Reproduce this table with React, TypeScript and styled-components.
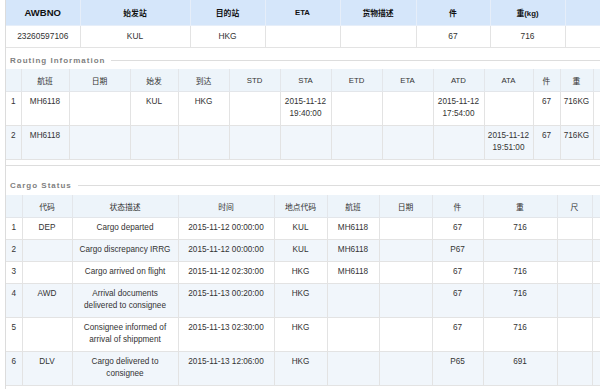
import React from "react";
import styled, { createGlobalStyle } from "styled-components";

const GlobalStyle = createGlobalStyle`
  html, body {
    margin: 0;
    padding: 0;
    background: #ffffff;
    overflow: hidden;
  }
  body {
    font-family: "Liberation Sans", "Noto Sans CJK SC", sans-serif;
    color: #333333;
  }
`;

const Page = styled.div`
  margin-left: 5px;
  width: 700px;
  height: 389px;
  border-left: 1px solid #dcdcdc;
`;

const Table = styled.table`
  border-collapse: collapse;
  table-layout: fixed;
`;

const Col = styled.col<{ $w: number }>`
  width: ${(p) => p.$w}px;
`;

const HeadCell = styled.th<{ $main?: boolean; $big?: boolean }>`
  height: ${(p) => (p.$main ? 25 : 22)}px;
  padding: 0 2px;
  background: ${(p) => (p.$main ? "#d5e6fa" : "#edf4fa")};
  border: 1px solid ${(p) => (p.$main ? "#e6eef9" : "#e3e6ea")};
  border-top: none;
  font-size: ${(p) => (p.$big ? 9.5 : 7.8)}px;
  font-weight: ${(p) => (p.$main ? "bold" : "normal")};
  color: ${(p) => (p.$main ? "#111111" : "#333333")};
  text-align: center;
  vertical-align: middle;
  &:first-child {
    border-left: none;
  }
`;

const Row = styled.tr<{ $even?: boolean }>`
  background: ${(p) => (p.$even ? "#f1f6fb" : "#ffffff")};
`;

const Cell = styled.td<{ $large?: boolean; $inset?: boolean }>`
  padding: 4px ${(p) => (p.$inset ? 5 : 1)}px 5px;
  border: 1px solid #e3e3e3;
  font-size: ${(p) => (p.$large ? 8.4 : 8.2)}px;
  line-height: 12px;
  text-align: center;
  vertical-align: top;
  &:first-child {
    border-left: none;
  }
`;

const Section = styled.section<{ $gap: number; $closed?: boolean }>`
  margin-top: ${(p) => p.$gap}px;
  padding-bottom: ${(p) => (p.$closed ? 5 : 0)}px;
  border-bottom: ${(p) => (p.$closed ? "1px solid #dddddd" : "none")};
`;

const Legend = styled.div<{ $after: number }>`
  display: flex;
  align-items: center;
  gap: 6px;
  height: 12px;
  padding-left: 4px;
  margin-bottom: ${(p) => p.$after}px;
  font-size: 8px;
  font-weight: bold;
  letter-spacing: 1px;
  color: #7f7f7f;
  white-space: nowrap;

  &::after {
    content: "";
    flex: 1;
    border-top: 1px solid #dddddd;
  }
`;

type Grid = {
  widths: number[];
  heads: string[];
  rows: string[][];
  textCol?: number;
};

const awb: Grid = {
  widths: [74, 110, 75, 75, 76, 74, 75, 80],
  heads: ["AWBNO", "始发站", "目的站", "ETA", "货物描述", "件", "重(kg)", ""],
  rows: [["23260597106", "KUL", "HKG", "", "", "67", "716", ""]],
};

const routing: Grid = {
  widths: [15, 48, 61, 48, 51, 51, 51, 51, 51, 51, 49, 27, 33, 60],
  heads: ["", "航班", "日期", "始发", "到达", "STD", "STA", "ETD", "ETA", "ATD", "ATA", "件", "重", ""],
  rows: [
    ["1", "MH6118", "", "KUL", "HKG", "", "2015-11-12 19:40:00", "", "", "2015-11-12 17:54:00", "", "67", "716KG", ""],
    ["2", "MH6118", "", "", "", "", "", "", "", "", "2015-11-12 19:51:00", "67", "716KG", ""],
  ],
};

const cargo: Grid = {
  widths: [16, 50, 106, 96, 53, 52, 53, 51, 74, 35, 60],
  heads: ["", "代码", "状态描述", "时间", "地点代码", "航班", "日期", "件", "重", "尺", ""],
  textCol: 2,
  rows: [
    ["1", "DEP", "Cargo departed", "2015-11-12 00:00:00", "KUL", "MH6118", "", "67", "716", "", ""],
    ["2", "", "Cargo discrepancy IRRG", "2015-11-12 00:00:00", "KUL", "MH6118", "", "P67", "", "", ""],
    ["3", "", "Cargo arrived on flight", "2015-11-12 02:30:00", "HKG", "MH6118", "", "67", "716", "", ""],
    ["4", "AWD", "Arrival documents delivered to consignee", "2015-11-13 00:20:00", "HKG", "", "", "67", "716", "", ""],
    ["5", "", "Consignee informed of arrival of shippment", "2015-11-13 02:30:00", "HKG", "", "", "67", "716", "", ""],
    ["6", "DLV", "Cargo delivered to consignee", "2015-11-13 12:06:00", "HKG", "", "", "P65", "691", "", ""],
  ],
};

const DataTable: React.FC<{ grid: Grid; main?: boolean }> = ({ grid, main }) => {
  const total = grid.widths.reduce((a, b) => a + b, 0);
  return (
    <Table style={{ width: total }}>
      <colgroup>
        {grid.widths.map((w, i) => (
          <Col key={i} $w={w} />
        ))}
      </colgroup>
      <thead>
        <tr>
          {grid.heads.map((h, i) => (
            <HeadCell key={i} $main={main} $big={main && i === 0}>
              {h}
            </HeadCell>
          ))}
        </tr>
      </thead>
      <tbody>
        {grid.rows.map((r, ri) => (
          <Row key={ri} $even={ri % 2 === 1}>
            {r.map((c, ci) => (
              <Cell key={ci} $large={main} $inset={ci === grid.textCol}>
                {c}
              </Cell>
            ))}
          </Row>
        ))}
      </tbody>
    </Table>
  );
};

export default function App() {
  return (
    <>
      <GlobalStyle />
      <Page>
        <DataTable grid={awb} main />
        <Section $gap={6} $closed>
          <Legend $after={3}>Routing Information</Legend>
          <DataTable grid={routing} />
        </Section>
        <Section $gap={13}>
          <Legend $after={4}>Cargo Status</Legend>
          <DataTable grid={cargo} />
        </Section>
      </Page>
    </>
  );
}
